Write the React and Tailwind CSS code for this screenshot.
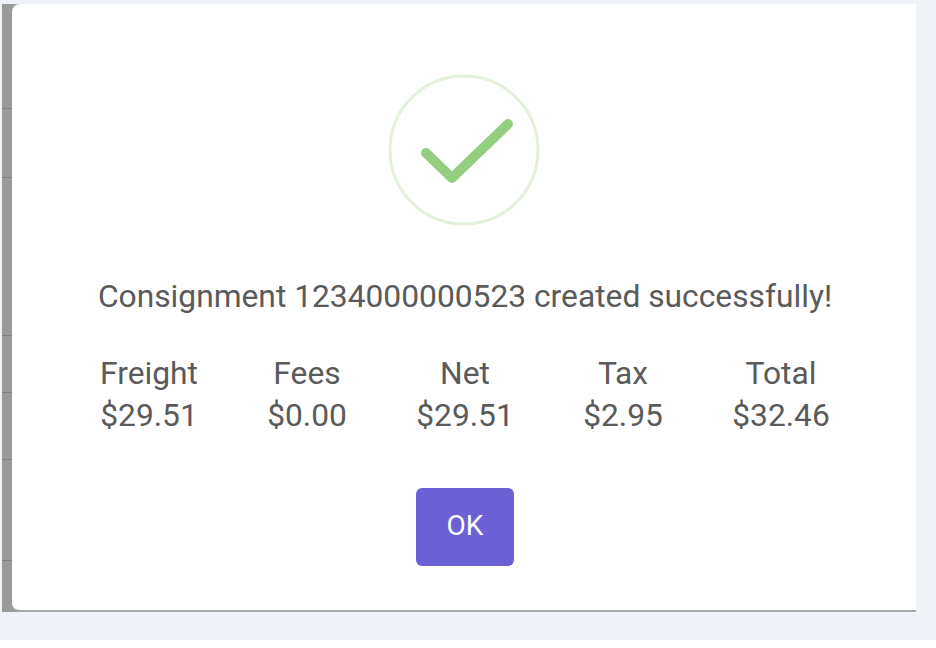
import React from "react";

const amounts = [
    { label: "Freight", value: "$29.51" },
    { label: "Fees", value: "$0.00" },
    { label: "Net", value: "$29.51" },
    { label: "Tax", value: "$2.95" },
    { label: "Total", value: "$32.46" },
];

// table rows of the page behind the dialog, only their left edge shows
const rowHeights = ["h-[105px]", "h-[69px]", "h-[158px]", "h-[57px]", "h-[67px]", "h-[101px]"];

const App = () => {
    return (
        <div className="w-[936px] h-[648px] bg-white overflow-hidden font-['Roboto',sans-serif]">
            <div className="h-[640px] bg-[#eff3f8] pt-1 pl-0.5">
                <div className="flex w-[914px] h-[608px] bg-[#9a9a9a]">
                    <div className="w-2.5 shrink-0">
                        {rowHeights.map((h, i) => (
                            <div key={i} className={`${h} border-b border-[#808080]`} />
                        ))}
                    </div>
                    <div className="flex-1 flex flex-col items-center bg-white rounded-l-lg border-b-2 border-[#a8a8a8]">
                        <svg className="mt-[69px] shrink-0" width="154" height="154" viewBox="0 0 154 154" fill="none">
                            <circle cx="77" cy="77" r="74" stroke="#e3f0da" strokeWidth="3" />
                            <path d="M39 80 L65 105 L121 51" stroke="#93cf7e" strokeWidth="10" strokeLinecap="round" strokeLinejoin="round" />
                        </svg>
                        <p className="mt-[51px] ml-0.5 text-[31.75px] leading-[38px] text-[#5a5a5a] whitespace-nowrap">
                            Consignment 1234000000523 created successfully!
                        </p>
                        <div className="mt-[37px] ml-0.5 w-[790px] grid grid-cols-5 text-center text-[31.75px] leading-[42px] text-[#5a5a5a]">
                            {amounts.map((a) => (
                                <div key={a.label}>
                                    <div>{a.label}</div>
                                    <div>{a.value}</div>
                                </div>
                            ))}
                        </div>
                        <button
                            type="button"
                            className="mt-[51px] ml-0.5 w-[98px] h-[78px] pb-0.5 rounded-md bg-[#6c60d6] text-white text-[28px] font-normal"
                        >
                            OK
                        </button>
                    </div>
                </div>
            </div>
        </div>
    );
};

export default App;
